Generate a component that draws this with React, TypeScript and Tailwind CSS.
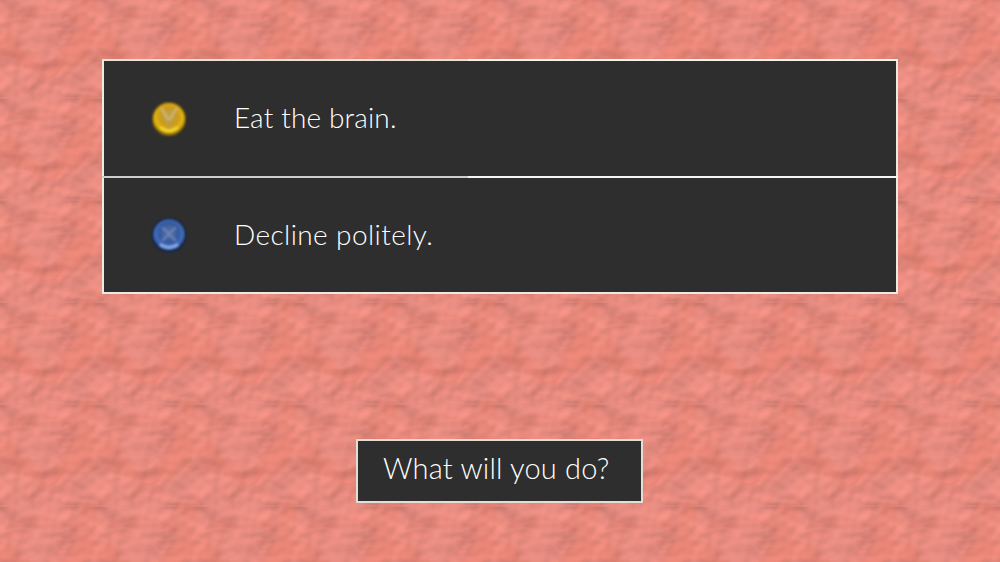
const offsets = [-100, 0, 100];
const rowOffsets = [-102, 0, 102];

const dark = [
  "M-4 44 L10 34 L22 52 Q36 70 54 66 L66 50 L78 30 L92 24 L96 40 L88 62 L74 70 L56 78 L34 76 L14 66 L0 62 Z",
  "M78 -2 L100 -8 L96 12 L84 16 Z",
  "M8 22 L30 18 L38 22 L22 28 L6 28 Z",
  "M58 14 L84 18 L90 24 L68 26 Z",
];
const light = [
  "M0 4 L18 -6 L40 0 L54 -8 L72 2 L60 12 L40 8 L18 12 L0 12 Z",
  "M12 30 L34 26 L58 30 L68 38 L56 56 L42 62 L28 54 L18 42 Z",
  "M70 78 L100 66 L100 88 L80 92 L62 86 Z",
  "M0 76 L22 78 L36 84 L18 92 L0 88 Z",
];
const ridges = [
  "M0 26 Q18 20 36 24 Q52 30 68 22",
  "M36 64 Q46 68 58 56",
  "M70 -4 Q84 -8 100 -2",
  "M6 74 Q18 70 32 76",
];
const creases = [
  "M8 16 Q16 13 24 17 Q30 19 36 16",
  "M56 36 Q62 34 66 39",
  "M58 42 Q64 45 72 42",
  "M40 78 Q48 84 58 76 L64 66",
  "M86 62 L94 64",
];

const options = [
  { label: "Eat the brain.", gem: "gold" },
  { label: "Decline politely.", gem: "blue" },
];

const Repeated = ({ children }: { children: React.ReactNode }) => (
  <>
    {offsets.flatMap((x) =>
      rowOffsets.map((y) => (
        <g key={`${x}-${y}`} transform={`translate(${x} ${y})`}>
          {children}
        </g>
      ))
    )}
  </>
);

const PaperTexture = () => (
  <svg className="absolute inset-0 h-full w-full" aria-hidden="true">
    <defs>
      <filter id="soft" x="-20%" y="-20%" width="140%" height="140%">
        <feGaussianBlur stdDeviation="3" />
      </filter>
      <filter id="thin" x="-20%" y="-20%" width="140%" height="140%">
        <feGaussianBlur stdDeviation="0.8" />
      </filter>
      <filter id="crumple" x="0" y="0" width="100%" height="100%" colorInterpolationFilters="sRGB">
        <feTurbulence
          type="fractalNoise"
          baseFrequency="0.03 0.0294"
          numOctaves="3"
          seed="7"
          stitchTiles="stitch"
        />
        <feDiffuseLighting surfaceScale="3" lightingColor="#e98a7e" diffuseConstant="1.2">
          <feDistantLight azimuth="250" elevation="55" />
        </feDiffuseLighting>
      </filter>
      <pattern id="paper" width="100" height="102" patternUnits="userSpaceOnUse" y="-4">
        <rect width="100" height="102" fill="#e98a7e" />
        <rect width="100" height="102" filter="url(#crumple)" opacity="0.75" />
        <g filter="url(#soft)">
          <Repeated>
            {dark.map((d) => (
              <path key={d} d={d} fill="#e17867" opacity="0.35" />
            ))}
            {light.map((d) => (
              <path key={d} d={d} fill="#ee9288" opacity="0.4" />
            ))}
          </Repeated>
        </g>
        <g filter="url(#thin)" fill="none">
          <Repeated>
            {ridges.map((d) => (
              <path key={d} d={d} stroke="#f09a90" strokeWidth="1.6" opacity="0.6" />
            ))}
            {creases.map((d) => (
              <path key={d} d={d} stroke="#d97060" strokeWidth="1.1" opacity="0.6" />
            ))}
          </Repeated>
        </g>
      </pattern>
    </defs>
    <rect width="100%" height="100%" fill="url(#paper)" />
  </svg>
);

const Gem = ({ kind }: { kind: string }) => {
  const gold = kind === "gold";
  const id = gold ? "gem-gold" : "gem-blue";
  return (
    <svg width="36" height="36" viewBox="0 0 36 36" aria-hidden="true">
      <defs>
        <radialGradient id={id} cx="50%" cy="42%" r="55%">
          {gold ? (
            <>
              <stop offset="0%" stopColor="#bfa251" />
              <stop offset="55%" stopColor="#cb9a1c" />
              <stop offset="85%" stopColor="#e6b80f" />
              <stop offset="100%" stopColor="#a07c0c" />
            </>
          ) : (
            <>
              <stop offset="0%" stopColor="#5f76a6" />
              <stop offset="55%" stopColor="#35599e" />
              <stop offset="85%" stopColor="#4470bc" />
              <stop offset="100%" stopColor="#1b3576" />
            </>
          )}
        </radialGradient>
        <filter id={`${id}-blur`} x="-20%" y="-20%" width="140%" height="140%">
          <feGaussianBlur stdDeviation="1.1" />
        </filter>
      </defs>
      <g filter={`url(#${id}-blur)`}>
        <circle cx="18" cy="18" r="17" fill={gold ? "#7a5e10" : "#12224f"} />
        <circle cx="18" cy="18" r="15.5" fill={`url(#${id})`} />
        <g fill="none" strokeLinecap="round">
          {gold ? (
            <>
              <path d="M11 8 L18 20 L25 8" stroke="#c9b67a" strokeWidth="2.2" />
              <path d="M18 20 L18 27" stroke="#b89c48" strokeWidth="3" />
              <path d="M10 27 Q18 33 26 27" stroke="#f6d52c" strokeWidth="3" />
            </>
          ) : (
            <>
              <path d="M12 11 L24 23 M24 11 L12 23" stroke="#6a82b6" strokeWidth="2.2" />
              <path d="M10 28 Q18 33 26 28" stroke="#86aeea" strokeWidth="3" />
            </>
          )}
        </g>
      </g>
    </svg>
  );
};

const Rule = ({ tone }: { tone: string }) => (
  <div className="flex h-[2px]">
    <div className={tone === "top" ? "w-[366px] bg-[#e8e2da]" : "w-[366px] bg-[#cfcdca]"} />
    <div className="flex-1 bg-[#f6f4f0]" />
  </div>
);

export default function App() {
  return (
    <div className="relative h-[562px] w-[1000px] overflow-hidden font-['Lato',sans-serif] font-light text-white">
      <PaperTexture />
      <div className="relative flex h-full flex-col pl-[102px] pt-[59px]">
        <div className="w-[796px] bg-[#2e2e2e]">
          <Rule tone="top" />
          <div className="border-x-2 border-[#ece9e4]">
            <div className="flex h-[115px] items-center pl-[47px]">
              <Gem kind={options[0].gem} />
              <span className="mb-[4px] ml-[47px] text-[28px] leading-none tracking-[0.15px]">{options[0].label}</span>
            </div>
          </div>
          <Rule tone="middle" />
          <div className="border-x-2 border-b-2 border-[#ece9e4]">
            <div className="flex h-[114px] items-center pl-[47px]">
              <Gem kind={options[1].gem} />
              <span className="mb-[2px] ml-[47px] text-[28px] leading-none tracking-[0.4px]">{options[1].label}</span>
            </div>
          </div>
        </div>
        <div className="ml-[254px] mt-[145px] flex h-[64px] w-[287px] items-center border-2 border-[#e6dcd6] bg-[#2e2e2e] pb-[7px] pl-[25px] text-[29px] leading-none tracking-[0.2px]">
          What will you do?
        </div>
      </div>
    </div>
  );
}
